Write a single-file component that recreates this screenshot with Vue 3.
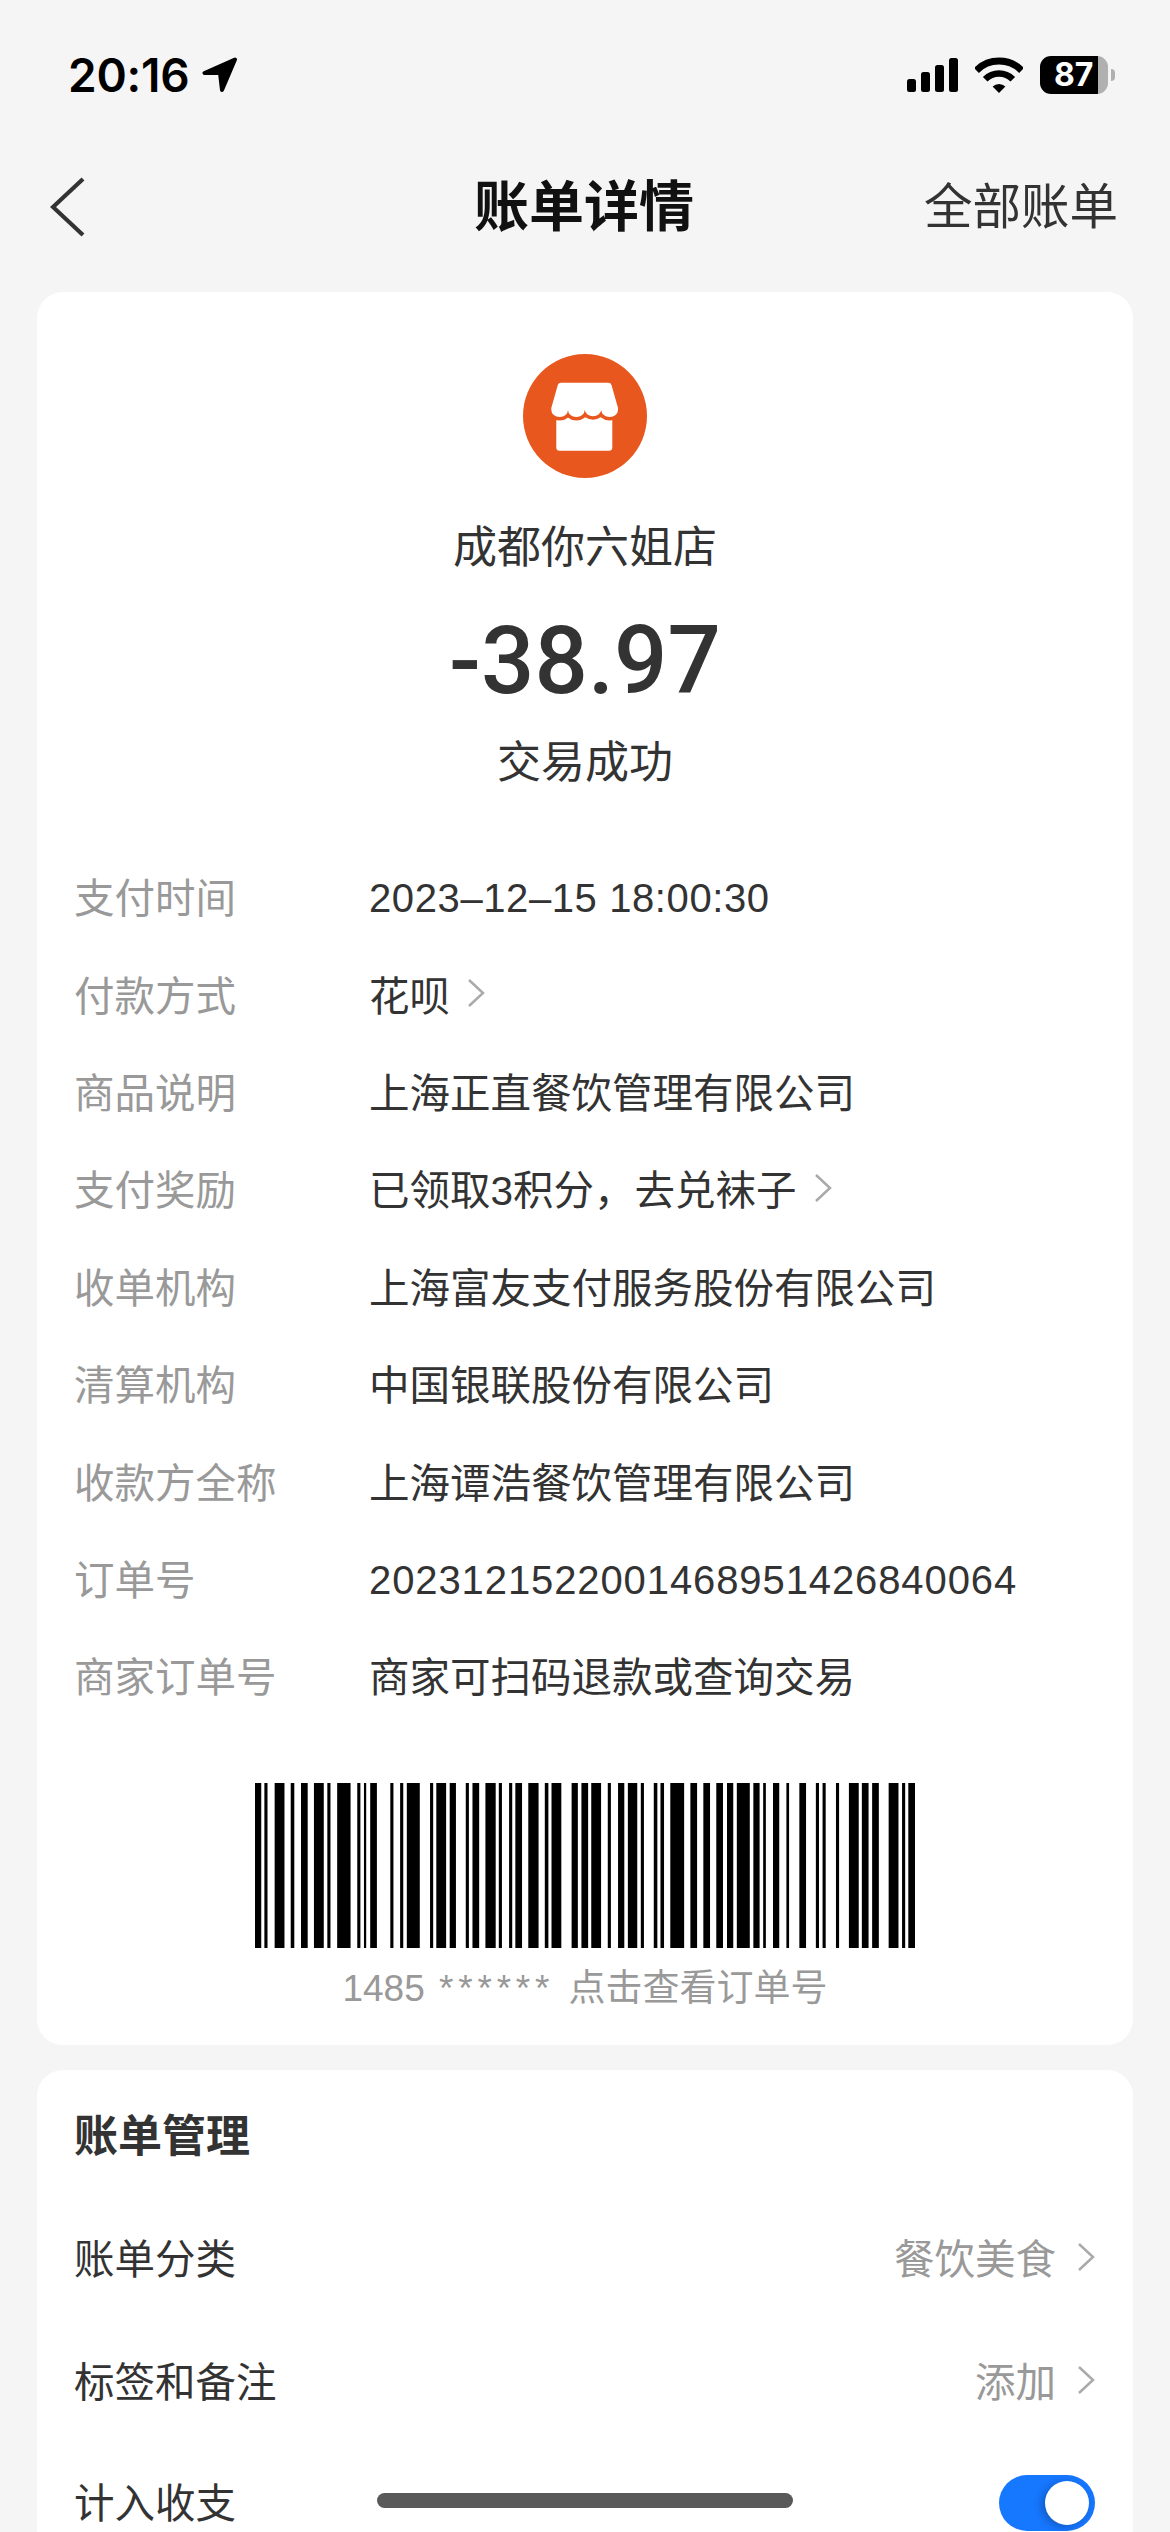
<script setup>
const rows = [
  { label: '支付时间', value: '2023–12–15 18:00:30', num: true, tight: true },
  { label: '付款方式', value: '花呗', arrow: true },
  { label: '商品说明', value: '上海正直餐饮管理有限公司' },
  { label: '支付奖励', value: '已领取3积分，去兑袜子', arrow: true },
  { label: '收单机构', value: '上海富友支付服务股份有限公司' },
  { label: '清算机构', value: '中国银联股份有限公司' },
  { label: '收款方全称', value: '上海谭浩餐饮管理有限公司' },
  { label: '订单号', value: '2023121522001468951426840064', num: true },
  { label: '商家订单号', value: '商家可扫码退款或查询交易' }
]
const bars = [
  [34,48],[55,62],[78,100],[114,122],[137,152],[166,188],[196,203],[218,248],[263,270],[278,283],[292,307],
  [337,344],[359,366],[374,403],[426,433],[440,462],[470,484],[506,513],[521,536],[550,573],[580,587],[603,610],
  [617,632],[646,669],[683,691],[698,720],[743,757],[765,780],[787,809],[824,831],[847,861],[869,890],[898,905],
  [927,935],[942,950],[964,995],[1009,1024],[1038,1053],[1067,1082],[1091,1105],[1113,1142],[1150,1164],[1172,1178],
  [1194,1208],[1224,1230],[1253,1268],[1290,1297],[1305,1312],[1335,1342],[1364,1386],[1393,1408],[1416,1431],
  [1453,1475],[1483,1490],[1497,1512]
]
</script>

<template>
  <div class="page">
    <div class="status">
      <div class="status-left">
        <span class="time">20:16</span>
        <svg class="loc" width="36" height="36" viewBox="0 0 36 36">
          <path d="M33 2.500 2.500 16H18L20 33Z" fill="#000" stroke="#000" stroke-width="4" stroke-linejoin="round" />
        </svg>
      </div>
      <div class="status-right">
        <svg width="51" height="34" viewBox="0 0 51 34">
          <rect x="0" y="21" width="9" height="13" rx="2.500" />
          <rect x="14" y="14" width="9" height="20" rx="2.500" />
          <rect x="28" y="7" width="9" height="27" rx="2.500" />
          <rect x="42" y="0" width="9" height="34" rx="2.500" />
        </svg>
        <svg width="48" height="36" viewBox="0 0 48 36">
          <path d="M1.400 13.400A32 32 0 0 1 46.600 13.400" fill="none" stroke="#000" stroke-width="7" />
          <path d="M10.200 22.200A19.500 19.500 0 0 1 37.800 22.200" fill="none" stroke="#000" stroke-width="6.500" />
          <path d="M24 36 17.600 29.600A9 9 0 0 1 30.400 29.600Z" />
        </svg>
        <div class="battery">
          <div class="battery-body"><span class="battery-level">87</span></div>
          <div class="battery-cap"></div>
        </div>
      </div>
    </div>

    <div class="nav">
      <svg class="back" width="36" height="60" viewBox="0 0 36 60">
        <path d="M33 2 3 30 33 58" fill="none" stroke="#333" stroke-width="4.200" />
      </svg>
      <div class="title">账单详情</div>
      <div class="all">全部账单</div>
    </div>

    <section class="card detail">
      <svg class="logo" width="124" height="124" viewBox="0 0 124 124">
        <circle cx="62" cy="62" r="62" fill="#e8571e" />
        <path d="M37 60H86a3.300 3.300 0 0 1 3.300 3.300V93.400a3.300 3.300 0 0 1-3.300 3.300H36.600a3.300 3.300 0 0 1-3.300-3.300V63.300Z" fill="#fff" />
        <path d="M38 28.700H85.300a3.300 3.300 0 0 1 3.200 2.400L95 54V56A8.350 7 0 0 1 78.300 56 8.350 7 0 0 1 61.700 56 8.350 7 0 0 1 45 56 8.350 7 0 0 1 28.300 56V54L34.800 31.100A3.300 3.300 0 0 1 38 28.700Z" fill="#fff" stroke="#e8571e" stroke-width="7" paint-order="stroke" />
      </svg>
      <div class="store">成都你六姐店</div>
      <div class="amount">-38.97</div>
      <div class="state">交易成功</div>

      <div class="rows">
        <div v-for="r in rows" :key="r.label" class="row">
          <span class="label">{{ r.label }}</span>
          <span class="value" :class="{ num: r.num, tight: r.tight }">{{ r.value }}</span>
          <svg v-if="r.arrow" class="chev" width="18" height="30" viewBox="0 0 18 30">
            <path d="M2 2 16 15 2 28" fill="none" stroke="#aaa" stroke-width="2.500" />
          </svg>
        </div>
      </div>

      <svg class="barcode" width="660" height="165" viewBox="34 0 1478 165" preserveAspectRatio="none">
        <rect v-for="b in bars" :key="b[0]" :x="b[0]" y="0" :width="b[1] - b[0]" height="165" />
      </svg>
      <div class="caption">1485 <span class="stars">******</span> 点击查看订单号</div>
    </section>

    <section class="card manage">
      <div class="manage-title">账单管理</div>
      <div class="mrow">
        <span>账单分类</span>
        <div class="mright">
          <span class="mvalue">餐饮美食</span>
          <svg width="18" height="30" viewBox="0 0 18 30"><path d="M2 2 16 15 2 28" fill="none" stroke="#aaa" stroke-width="2.500" /></svg>
        </div>
      </div>
      <div class="mrow">
        <span>标签和备注</span>
        <div class="mright">
          <span class="mvalue">添加</span>
          <svg width="18" height="30" viewBox="0 0 18 30"><path d="M2 2 16 15 2 28" fill="none" stroke="#aaa" stroke-width="2.500" /></svg>
        </div>
      </div>
      <div class="mrow">
        <span class="mlast">计入收支</span>
        <div class="toggle"><div class="knob"></div></div>
      </div>
    </section>

    <div class="home"></div>
  </div>
</template>

<style scoped>
.page {
  position: relative;
  width: 1170px;
  height: 2532px;
  overflow: hidden;
  background: #f5f5f5;
  font-family: "Liberation Sans", "Noto Sans CJK SC", sans-serif;
  color: #333;
}
.status {
  height: 149px;
  display: flex;
  align-items: center;
  justify-content: space-between;
  padding: 0 55px 0 68px;
  box-sizing: border-box;
}
.status-left { display: flex; align-items: center; gap: 12px; }
.time {
  font-family: Inter, sans-serif;
  font-weight: 600;
  font-size: 46px;
  color: #000;
  letter-spacing: -0.200px;
  line-height: 60px;
}
.status-right { display: flex; align-items: center; gap: 17px; }
.battery { display: flex; align-items: center; gap: 3px; }
.battery-body {
  width: 68px;
  height: 38px;
  border-radius: 11px;
  background: linear-gradient(to right, #000 85%, #b0b0b0 85%);
  display: flex;
  align-items: center;
  padding-left: 14px;
  box-sizing: border-box;
}
.battery-level {
  font-family: Inter, sans-serif;
  font-size: 32px;
  font-weight: 700;
  color: #fff;
  line-height: 38px;
}
.battery-cap {
  width: 4px;
  height: 12px;
  background: #b0b0b0;
  border-radius: 0 6px 6px 0;
}
.nav {
  height: 116px;
  display: grid;
  grid-template-columns: 1fr auto 1fr;
  align-items: center;
  padding: 0 52px 0 50px;
  margin-bottom: 27px;
}
.title { font-size: 55px; font-weight: 700; color: #111; line-height: 70px; }
.all { font-size: 48.500px; color: #333; text-align: right; line-height: 70px; }
.card {
  width: 1096px;
  margin: 0 37px 25px;
  background: #fff;
  border-radius: 26px;
  box-sizing: border-box;
}
.detail {
  height: 1753px;
  padding-top: 62px;
  display: flex;
  flex-direction: column;
  align-items: center;
}
.logo { flex: none; }
.store { font-size: 44px; line-height: 60px; margin-top: 40px; }
.amount {
  font-family: Roboto, sans-serif;
  font-weight: 500;
  font-size: 94px;
  line-height: 110px;
  margin-top: 28px;
}
.state { font-size: 44px; line-height: 60px; margin-top: 17px; }
.rows { align-self: stretch; margin-top: 54px; padding-left: 37px; }
.row { height: 97.400px; display: flex; align-items: center; font-size: 40.500px; }
.label { width: 295px; color: #999; flex: none; }
.value { color: #333; }
.num { font-size: 40px; letter-spacing: 0.900px; padding-top: 6px; }
.tight { letter-spacing: 0.600px; }
.chev { margin-left: 17px; }
.barcode { margin-top: 59px; flex: none; fill: #000; }
.caption { font-size: 37px; line-height: 50px; color: #999; margin-top: 16px; word-spacing: 4px; }
.stars { letter-spacing: 4.800px; }
.manage { padding: 37px 38px 0 37px; }
.manage-title { font-size: 44px; font-weight: 700; line-height: 60px; margin-bottom: 28px; }
.mrow {
  height: 123px;
  display: flex;
  align-items: center;
  justify-content: space-between;
  font-size: 40.500px;
  color: #333;
}
.mlast { padding-bottom: 5px; }
.mright { display: flex; align-items: center; gap: 21px; }
.mvalue { color: #999; }
.toggle {
  width: 96px;
  height: 56px;
  border-radius: 28px;
  background: #1677ff;
  display: flex;
  justify-content: flex-end;
  align-items: center;
  padding-right: 6px;
  box-sizing: border-box;
}
.knob {
  width: 44px;
  height: 44px;
  border-radius: 50%;
  background: #fff;
  box-shadow: -3px 2px 8px rgba(0, 0, 0, 0.25);
}
.home {
  position: absolute;
  left: 377px;
  top: 2493px;
  width: 416px;
  height: 15px;
  border-radius: 8px;
  background: #595959;
}
</style>
